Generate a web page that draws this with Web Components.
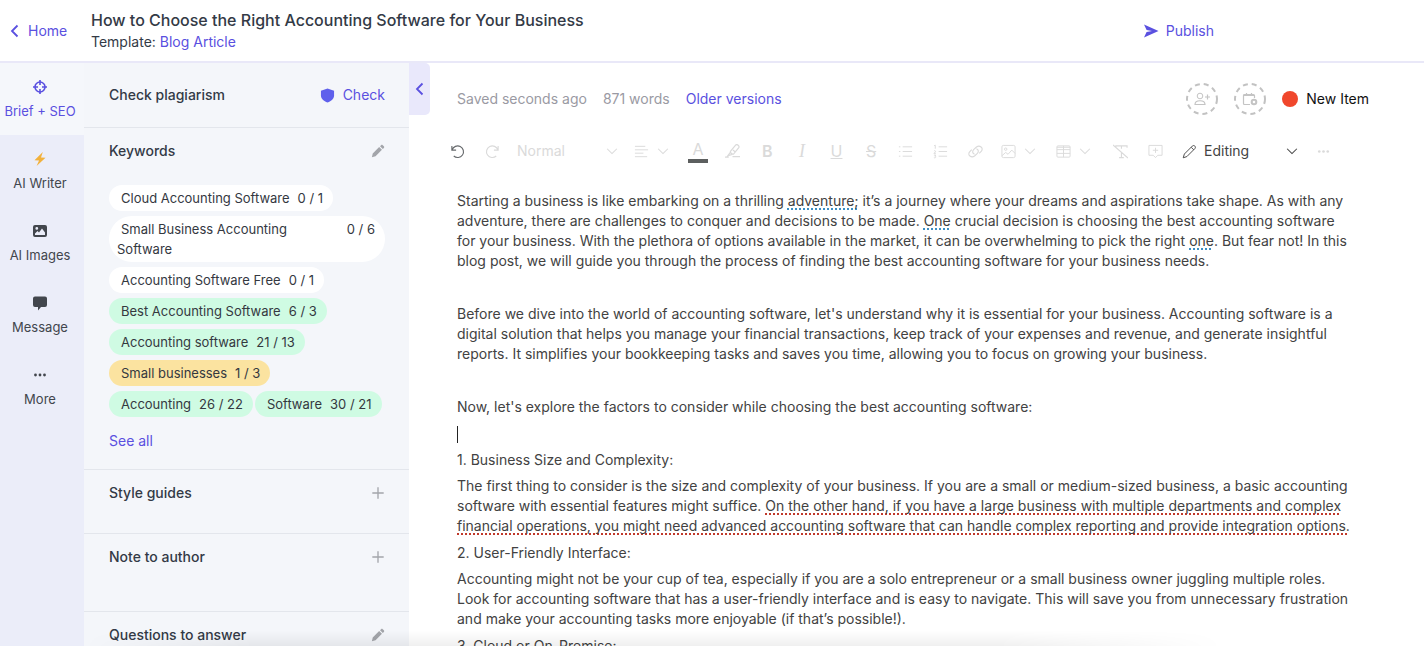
<!DOCTYPE html>
<html lang="en">
<head>
<meta charset="utf-8">
<meta name="viewport" content="width=device-width, initial-scale=1">
<title>How to Choose the Right Accounting Software for Your Business</title>
<style>
  :root {
    --accent: #5a50e0;
    --ink: #333a46;
    --panel: #f4f6fa;
    --rail: #ebedf9;
    --line: #e3e6ec;
    --muted: #9a9aa3;
    --off: #dadada;
  }
  body {
    margin: 0;
    height: 100vh;
    overflow: hidden;
    background: #fff;
    color: var(--ink);
    font-family: Inter, 'Liberation Sans', sans-serif;
    font-size: 14px;
    line-height: 20px;
  }
</style>
</head>
<body>
<writer-app></writer-app>

<script>
const ICONS = {
  back: '<path d="M10.500 2.500 5 8l5.500 5.500" stroke-width="1.800"/>',
  down: '<path d="M1.500 5 8 11.500 14.500 5" stroke-width="1.400"/>',
  send: '<path d="M1 1.500 15.500 8 1 14.500 3.600 8.900 9 8 3.600 7.100Z" fill="currentColor" stroke="none"/>',
  target: '<circle cx="8" cy="8" r="5" stroke-width="1.600"/><path d="M8 1v5M8 10v5M1 8h5M10 8h5" stroke-width="1.600"/>',
  bolt: '<path d="M10.800 1 2.500 9.200 7 9.600 4.600 15 13.500 6.800 9 6.400Z" fill="currentColor" stroke="none"/>',
  picture: '<path fill="currentColor" stroke="none" fill-rule="evenodd" d="M3 2h10a2 2 0 0 1 2 2v8a2 2 0 0 1-2 2H3a2 2 0 0 1-2-2V4a2 2 0 0 1 2-2Zm0 10h10V9.500l-3-4-3 4-1.500-1.500L3 10.500ZM4.800 4a1.400 1.400 0 1 0 0 2.800 1.400 1.400 0 0 0 0-2.800Z"/>',
  message: '<path fill="currentColor" stroke="none" d="M3 1.500h10a2 2 0 0 1 2 2V10a2 2 0 0 1-2 2H9l-3 3.500V12H3a2 2 0 0 1-2-2V3.500a2 2 0 0 1 2-2Z"/>',
  dots: '<g fill="currentColor" stroke="none"><circle cx="3.500" cy="8" r="1.400"/><circle cx="8" cy="8" r="1.400"/><circle cx="12.500" cy="8" r="1.400"/></g>',
  shield: '<path fill="currentColor" stroke="none" d="M8 .5 15 3v5c0 3.500-3 6-7 7.500C4 14 1 11.500 1 8V3Z"/>',
  pencil: '<path fill="currentColor" stroke="none" d="M1 15l1-4.200 7.300-7.300 3.200 3.200L5.200 14ZM10.300 2.500l1.200-1.200c.6-.6 1.300-.6 1.900 0l1.300 1.300c.6.600.6 1.300 0 1.900l-1.200 1.200Z"/>',
  plus: '<path d="M8 1.500v13M1.500 8h13" stroke-width="1.500"/>',
  undo: '<path d="M2 2v4.500h4.500M2.300 6.300A6.200 6.200 0 1 1 4 12.800" stroke-width="1.200"/>',
  redo: '<path d="M14 2v4.500H9.500M13.700 6.300A6.200 6.200 0 1 0 12 12.800" stroke-width="1.200"/>',
  align: '<path d="M1 2.500h11M1 6.200h14M1 9.800h9M1 13.500h13"/>',
  marker: '<path d="M6 7.500 11.500 1c1.300-1.200 4.300 1 3.200 2.800L9.500 10.300c-1.500 1.200-4.500-.8-3.500-2.800ZM8.500 6.500l2.500 2M5.700 9 3 12.500l4.500-1.500M0 14h4M8 13.500h8" stroke-width="1.300"/>',
  bullets: '<path d="M5 3h10M5 8h10M5 13h10M1 3h1.500M1 8h1.500M1 13h1.500"/>',
  numbers: '<path d="M6 3h9M6 8h9M6 13h9M1.200 1.800l1.200-.6V5M1 7.500c1-1 2.200 0 1.500 1L1 10h2M1 11.800h2l-1 1.200c2 .2 1 2.300-1 1.600"/>',
  link: '<path d="M7 11C4.500 10 4.500 7.500 6 6L9 3.200c3.500-2.500 8 1 5.300 4.300L12 10M9 5c2.500 1 2.500 3.500 1 5L7 12.800c-3.500 2.500-8-1-5.300-4.300L4 6" stroke-width="1.200"/>',
  image: '<rect x="1" y="1.500" width="14" height="13" rx="1.500"/><circle cx="5" cy="5.500" r="1.300"/><path d="M1 12.500 5 9l2.500 2 4-4.500L15 10"/>',
  table: '<rect x="1" y="2" width="14" height="12" rx="1"/><path d="M1 6h14M1 10h14M8 2v12M1 3.500h14"/>',
  clear: '<path d="M3 4V2h12v2M9 2v3M9 9v5.500M6.500 14.500h5M0 1l16 14" stroke-width="1.200"/>',
  comment: '<path d="M1 1.500h14v10.500h-4.500L8 14.500 5.500 12H1ZM8 4v5.500M5.200 6.700h5.600"/>',
  edit: '<path d="M1.300 14.700 2.500 10.700 11 2.200c1.800-1.800 4.500.9 2.700 2.700L5.200 13.400ZM9.800 3.500l2.700 2.700"/>',
  person: '<circle cx="6" cy="5" r="2.800"/><path d="M1 13.500c0-5 10-5 10 0ZM13.500 3.500v5M11 6h5" stroke-width="1.200"/>',
  calendar: '<path d="M8 13.500H2.500a1 1 0 0 1-1-1V4.500a1 1 0 0 1 1-1h9a1 1 0 0 1 1 1V7M1.500 4.500h11M4.500 2v2M9.500 2v2" stroke-width="1.200"/><circle cx="12" cy="11" r="2.300" stroke-width="2"/>'
}

// Clones the markup into an open shadow root
class Base extends HTMLElement {
  constructor() {
    super()
    const template = document.createElement('template')
    template.innerHTML = `
      <style>
        * { box-sizing: border-box; }
        button, select { font: inherit; color: inherit; background: none; border: 0; margin: 0; padding: 0; cursor: pointer; }
        a { color: var(--accent); text-decoration: none; }
      </style>
      ${this.render()}`
    this.attachShadow({ mode: 'open' }).appendChild(template.content.cloneNode(true))
  }
}

class UiIcon extends Base {
  render() {
    return `
      <style>
        :host { display: inline-flex; flex: none; width: var(--size, 16px); height: var(--size, 16px); }
        svg { width: 100%; height: 100%; fill: none; stroke: currentColor; }
      </style>
      <svg viewBox="0 0 16 16" aria-hidden="true">${ICONS[this.getAttribute('name')]}</svg>`
  }
}

class AppHeader extends Base {
  render() {
    return `
      <style>
        :host { display: flex; align-items: center; height: 63px; box-sizing: border-box; padding-right: 210px; border-bottom: 2px solid #e9e8f8; }
        .home { display: flex; align-items: center; gap: 5px; width: 91px; padding-left: 7px; }
        h1 { margin: 0; font-size: 16px; font-weight: 500; line-height: 22px; }
        p { margin: 0; line-height: 22px; }
        .publish { display: flex; align-items: center; gap: 7px; margin-left: auto; color: var(--accent); }
      </style>
      <a class="home" href="#"><ui-icon name="back"></ui-icon>Home</a>
      <div>
        <h1>How to Choose the Right Accounting Software for Your Business</h1>
        <p>Template: <a href="#">Blog Article</a></p>
      </div>
      <button class="publish"><ui-icon name="send"></ui-icon>Publish</button>`
  }
}

class RailItem extends Base {
  render() {
    return `
      <style>
        :host { display: block; color: #42464d; }
        :host([active]) { background: #f5f7fb; color: var(--accent); }
        button { display: flex; flex-direction: column; align-items: center; gap: 8px; width: 100%; height: 72px; padding: 16px 4px 0 0; font-size: 13px; line-height: 16px; white-space: nowrap; }
        ui-icon { color: var(--icon, inherit); }
      </style>
      <button><ui-icon name="${this.getAttribute('icon')}"></ui-icon><slot></slot></button>`
  }
}

class SideRail extends Base {
  render() {
    return `
      <style>
        :host { display: block; background: var(--rail); }
        .writer { --icon: #f2b13c; }
      </style>
      <nav>
        <rail-item icon="target" active>Brief + SEO</rail-item>
        <rail-item icon="bolt" class="writer">AI Writer</rail-item>
        <rail-item icon="picture">AI Images</rail-item>
        <rail-item icon="message">Message</rail-item>
        <rail-item icon="dots">More</rail-item>
      </nav>`
  }
}

class PanelSection extends Base {
  render() {
    return `
      <style>
        :host { display: block; padding: 13px 24px 18px 25px; border-bottom: 1px solid var(--line); }
        header { display: flex; justify-content: space-between; align-items: center; height: 20px; }
        h2 { margin: 0; font-size: 14px; font-weight: 500; }
      </style>
      <header><h2>${this.getAttribute('heading')}</h2><slot name="action"></slot></header>
      <slot></slot>`
  }
}

class KeywordChip extends Base {
  render() {
    return `
      <style>
        :host { display: flex; gap: 8px; padding: 3px 10px 3px 8px; border-radius: 23px; background: #fff; font-size: 13px; color: #34383f; }
        :host([state=done]) { background: #cffbe3; }
        :host([state=low]) { background: #fbe3a0; }
        .name { text-indent: 4px; }
        .count { margin-left: auto; white-space: nowrap; }
      </style>
      <span class="name"><slot></slot></span><span class="count">${this.getAttribute('count')}</span>`
  }
}

class BriefPanel extends Base {
  render() {
    return `
      <style>
        :host { display: block; overflow: hidden; background: var(--panel); }
        .plagiarism { padding: 22px 24px 22px 25px; }
        .check { display: flex; align-items: center; gap: 8px; color: var(--accent); --size: 15px; }
        .check ui-icon { color: #5f60ec; }
        .icon { display: flex; color: #a3a5aa; --size: 14px; }
        .chips { display: flex; flex-wrap: wrap; gap: 5px 2px; margin: 24px 0 14px; }
        .guides { min-height: 64px; box-sizing: border-box; }
        .note { min-height: 78px; box-sizing: border-box; }
        .questions { min-height: 120px; }
      </style>
      <panel-section class="plagiarism" heading="Check plagiarism">
        <button slot="action" class="check"><ui-icon name="shield"></ui-icon>Check</button>
      </panel-section>
      <panel-section heading="Keywords">
        <button slot="action" class="icon" aria-label="Edit keywords"><ui-icon name="pencil"></ui-icon></button>
        <div class="chips">
          <keyword-chip count="0 / 1">Cloud Accounting Software</keyword-chip>
          <keyword-chip count="0 / 6">Small Business Accounting Software</keyword-chip>
          <keyword-chip count="0 / 1">Accounting Software Free</keyword-chip>
          <keyword-chip count="6 / 3" state="done">Best Accounting Software</keyword-chip>
          <keyword-chip count="21 / 13" state="done">Accounting software</keyword-chip>
          <keyword-chip count="1 / 3" state="low">Small businesses</keyword-chip>
          <keyword-chip count="26 / 22" state="done">Accounting</keyword-chip>
          <keyword-chip count="30 / 21" state="done">Software</keyword-chip>
        </div>
        <a href="#">See all</a>
      </panel-section>
      <panel-section class="guides" heading="Style guides">
        <button slot="action" class="icon" aria-label="Add style guide"><ui-icon name="plus"></ui-icon></button>
      </panel-section>
      <panel-section class="note" heading="Note to author">
        <button slot="action" class="icon" aria-label="Add note"><ui-icon name="plus"></ui-icon></button>
      </panel-section>
      <panel-section class="questions" heading="Questions to answer">
        <button slot="action" class="icon" aria-label="Edit questions"><ui-icon name="pencil"></ui-icon></button>
      </panel-section>`
  }
}

class DocumentMeta extends Base {
  render() {
    return `
      <style>
        :host { display: flex; align-items: center; gap: 16px; height: 32px; padding-right: 15px; color: var(--muted); }
        .round { display: grid; place-items: center; position: relative; width: 32px; height: 32px; color: #c4c4c4; }
        .round:first-of-type { margin-left: auto; }
        .ring { position: absolute; inset: 0; fill: none; stroke: #c2c2c2; stroke-width: 2; stroke-dasharray: 5 4; }
        .status { display: flex; align-items: center; gap: 8px; color: #111; }
        .status::before { content: ''; width: 16px; height: 16px; border-radius: 50%; background: #f0472c; }
      </style>
      <span>Saved seconds ago</span>
      <span>871 words</span>
      <a href="#">Older versions</a>
      <button class="round" aria-label="Assign person"><svg class="ring" viewBox="0 0 32 32"><circle cx="16" cy="16" r="15"/></svg><ui-icon name="person"></ui-icon></button>
      <button class="round" aria-label="Set due date"><svg class="ring" viewBox="0 0 32 32"><circle cx="16" cy="16" r="15"/></svg><ui-icon name="calendar"></ui-icon></button>
      <button class="status">New Item</button>`
  }
}

class ToolSelect extends Base {
  render() {
    return `
      <style>
        :host { display: grid; grid-template-columns: 1fr 12px; align-items: center; }
        select { appearance: none; grid-area: 1 / 1 / 2 / 3; outline: 0; }
        ui-icon { --size: 12px; grid-area: 1 / 2; pointer-events: none; }
      </style>
      <select aria-label="${this.getAttribute('label')}"><option>${this.getAttribute('value')}</option></select>
      <ui-icon name="down"></ui-icon>`
  }
}

class EditorToolbar extends Base {
  render() {
    return `
      <style>
        :host { display: flex; align-items: center; gap: 15px; height: 24px; margin: 24px 0 28px -10px; color: var(--off); }
        button { display: flex; justify-content: center; align-items: center; flex: none; width: 20px; height: 24px; --size: 15px; }
        .menu { width: 40px; gap: 8px; padding-right: 3px; }
        .menu ui-icon + ui-icon { --size: 12px; }
        .format { display: flex; justify-content: space-between; flex: 0 1 297px; font-size: 16px; }
        .color { border-bottom: 4px solid #5c5f5f; }
        .serif { font-family: 'Liberation Serif', serif; font-size: 18px; }
        .dark { color: #66696c; }
        b { font-weight: 600; }
        .style { width: 101px; }
        .mode { display: flex; align-items: center; gap: 4px; color: #444; }
        .mode ui-icon { --size: 15px; margin: 0 3px 0 2px; }
        .mode tool-select { width: 94px; }
      </style>
      <button class="dark" aria-label="Undo"><ui-icon name="undo"></ui-icon></button>
      <button aria-label="Redo"><ui-icon name="redo"></ui-icon></button>
      <tool-select class="style" label="Text style" value="Normal"></tool-select>
      <button class="menu" aria-label="Align"><ui-icon name="align"></ui-icon><ui-icon name="down"></ui-icon></button>
      <div class="format">
        <button class="color" aria-label="Text colour">A</button>
        <button aria-label="Highlight"><ui-icon name="marker"></ui-icon></button>
        <button aria-label="Bold"><b>B</b></button>
        <button class="serif" aria-label="Italic"><i>I</i></button>
        <button aria-label="Underline"><u>U</u></button>
        <button aria-label="Strikethrough"><s>S</s></button>
        <button aria-label="Bulleted list"><ui-icon name="bullets"></ui-icon></button>
        <button aria-label="Numbered list"><ui-icon name="numbers"></ui-icon></button>
        <button aria-label="Link"><ui-icon name="link"></ui-icon></button>
      </div>
      <button class="menu" aria-label="Image"><ui-icon name="image"></ui-icon><ui-icon name="down"></ui-icon></button>
      <button class="menu" aria-label="Table"><ui-icon name="table"></ui-icon><ui-icon name="down"></ui-icon></button>
      <button aria-label="Clear formatting"><ui-icon name="clear"></ui-icon></button>
      <button aria-label="Comment"><ui-icon name="comment"></ui-icon></button>
      <div class="mode"><ui-icon name="edit"></ui-icon><tool-select label="Mode" value="Editing"></tool-select></div>
      <button aria-label="More tools"><ui-icon name="dots"></ui-icon></button>`
  }
}

class ArticleBody extends Base {
  render() {
    return `
      <style>
        :host { display: block; max-width: 896px; color: #424242; }
        p, h3 { margin: 0 0 6px; font-size: 14px; font-weight: 400; }
        h3 { margin-top: 7px; }
        .blank { height: 21px; }
        .caret { height: 20px; }
        .caret::before { content: ''; display: inline-block; width: 1px; height: 17px; background: #222; vertical-align: middle; }
        mark { background: none; color: inherit; text-decoration: underline dotted 2px; text-underline-offset: 2px; text-decoration-skip-ink: none; }
        .hint { text-decoration-color: #3b8fc4; }
        .error { text-decoration-color: #c0392b; }
      </style>
      <p>Starting a business is like embarking on a thrilling <mark class="hint">adventure;</mark> it’s a journey where your dreams and aspirations take shape. As with any adventure, there are challenges to conquer and decisions to be made. <mark class="hint">One</mark> crucial decision is choosing the best accounting software for your business. With the plethora of options available in the market, it can be overwhelming to pick the right <mark class="hint">one</mark>. But fear not! In this blog post, we will guide you through the process of finding the best accounting software for your business needs.</p>
      <p class="blank"></p>
      <p>Before we dive into the world of accounting software, let's understand why it is essential for your business. Accounting software is a digital solution that helps you manage your financial transactions, keep track of your expenses and revenue, and generate insightful reports. It simplifies your bookkeeping tasks and saves you time, allowing you to focus on growing your business.</p>
      <p class="blank"></p>
      <p>Now, let's explore the factors to consider while choosing the best accounting software:</p>
      <p class="caret"></p>
      <h3>1. Business Size and Complexity:</h3>
      <p>The first thing to consider is the size and complexity of your business. If you are a small or medium-sized business, a basic accounting software with essential features might suffice. <mark class="error">On the other hand, if you have a large business with multiple departments and complex financial operations, you might need advanced accounting software that can handle complex reporting and provide integration options.</mark></p>
      <h3>2. User-Friendly Interface:</h3>
      <p>Accounting might not be your cup of tea, especially if you are a solo entrepreneur or a small business owner juggling multiple roles. Look for accounting software that has a user-friendly interface and is easy to navigate. This will save you from unnecessary frustration and make your accounting tasks more enjoyable (if that’s possible!).</p>
      <h3>3. Cloud or On-Premise:</h3>`
  }
}

class WriterApp extends Base {
  render() {
    return `
      <style>
        :host { display: grid; grid-template: auto minmax(0, 1fr) / 84px 325px 21px minmax(0, 1fr); height: 100%; position: relative; }
        app-header { grid-column: 1 / -1; }
        .collapse { display: grid; place-items: center; height: 52px; background: #e9e8fb; color: var(--accent); border-radius: 0 5px 5px 0; }
        main { overflow: hidden; padding: 20px 40px 0 27px; }
        .fade { position: absolute; left: 84px; right: 200px; bottom: 0; height: 16px; pointer-events: none; background: linear-gradient(transparent, rgba(0, 0, 0, .06)); -webkit-mask: linear-gradient(90deg, transparent, #000 15%, #000 80%, transparent); }
      </style>
      <app-header></app-header>
      <side-rail></side-rail>
      <brief-panel></brief-panel>
      <button class="collapse" aria-label="Collapse panel"><ui-icon name="back"></ui-icon></button>
      <main>
        <document-meta></document-meta>
        <editor-toolbar></editor-toolbar>
        <article-body></article-body>
      </main>
      <div class="fade"></div>`
  }
}

// Elements read their attributes while rendering, so the page root goes last
window.customElements.define('ui-icon', UiIcon)
window.customElements.define('app-header', AppHeader)
window.customElements.define('rail-item', RailItem)
window.customElements.define('side-rail', SideRail)
window.customElements.define('panel-section', PanelSection)
window.customElements.define('keyword-chip', KeywordChip)
window.customElements.define('brief-panel', BriefPanel)
window.customElements.define('document-meta', DocumentMeta)
window.customElements.define('tool-select', ToolSelect)
window.customElements.define('editor-toolbar', EditorToolbar)
window.customElements.define('article-body', ArticleBody)
window.customElements.define('writer-app', WriterApp)
</script>
</body>
</html>
